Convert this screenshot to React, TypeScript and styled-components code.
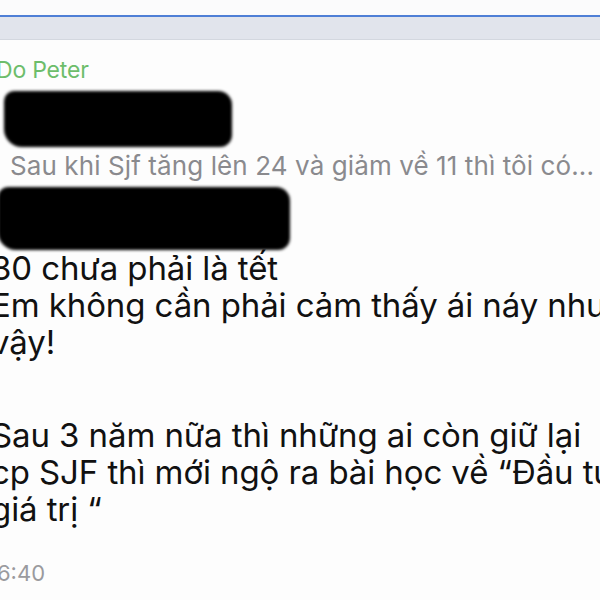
import * as React from "react";
import styled, { createGlobalStyle } from "styled-components";

const GlobalStyle = createGlobalStyle`
  html, body {
    margin: 0;
    padding: 0;
    background: #ffffff;
  }
  body {
    font-family: Inter, "Noto Sans", "Liberation Sans", sans-serif;
    overflow: hidden;
  }
`;

const Screen = styled.div({
  width: "600px",
  height: "600px",
  overflow: "hidden",
  background: "#fdfdfd",
  display: "flex",
  flexDirection: "column",
});

const TopBar = styled.div({
  height: "15px",
  background: "#fbfbfc",
});

const InputStrip = styled.div({
  height: "22px",
  borderTop: "2px solid #4f7fd6",
  borderBottom: "1px solid #d3d7df",
  background: "#e1e4ec",
});

const Bubble = styled.div({
  display: "flex",
  flexDirection: "column",
  marginLeft: "-4px",
  paddingTop: "17px",
});

const Sender = styled.div({
  color: "#6dbd6b",
  fontSize: "23px",
  lineHeight: "26px",
  letterSpacing: "-0.2px",
});

const Redaction = styled.div<{ $w: number; $h: number; $ml: number; $mt: number }>(
  ({ $w, $h, $ml, $mt }) => ({
    width: `${$w}px`,
    height: `${$h}px`,
    marginLeft: `${$ml}px`,
    marginTop: `${$mt}px`,
    background: "#000",
    borderRadius: "10px 14px 12px 18px",
    filter: "blur(1.6px)",
  })
);

const Quote = styled.div({
  color: "#8a8a8e",
  fontSize: "26px",
  lineHeight: "30px",
  whiteSpace: "nowrap",
  letterSpacing: "0.1px",
  margin: "4px 0 6px 14px",
});

const Body = styled.div({
  color: "#111",
  fontSize: "33px",
  lineHeight: "37px",
  whiteSpace: "nowrap",
  letterSpacing: "-0.1px",
  marginTop: "0px",
  marginLeft: "-5px",
});

const Line = styled.div<{ $blank?: boolean }>(({ $blank }) => ({
  height: $blank ? "56px" : "37px",
}));

const Time = styled.div({
  color: "#9a9a9e",
  fontSize: "22px",
  lineHeight: "26px",
  marginTop: "32px",
  marginLeft: "-8px",
});

const lines = [
  "30 chưa phải là tết",
  "Em không cần phải cảm thấy ái náy như",
  "vậy!",
  "",
  "Sau 3 năm nữa thì những ai còn giữ lại",
  "cp SJF thì mới ngộ ra bài học về “Đầu tư",
  "giá trị “",
];

export default function App() {
  return (
    <>
      <GlobalStyle />
      <Screen>
        <TopBar />
        <InputStrip />
        <Bubble>
          <Sender>Do Peter</Sender>
          <Redaction $w={228} $h={56} $ml={8} $mt={8} />
          <Quote>Sau khi Sjf tăng lên 24 và giảm về 11 thì tôi có...</Quote>
          <Redaction $w={292} $h={63} $ml={2} $mt={0} />
          <Body>
            {lines.map((l, i) => (
              <Line key={i} $blank={l === ""}>
                {l}
              </Line>
            ))}
          </Body>
          <Time>16:40</Time>
        </Bubble>
      </Screen>
    </>
  );
}
